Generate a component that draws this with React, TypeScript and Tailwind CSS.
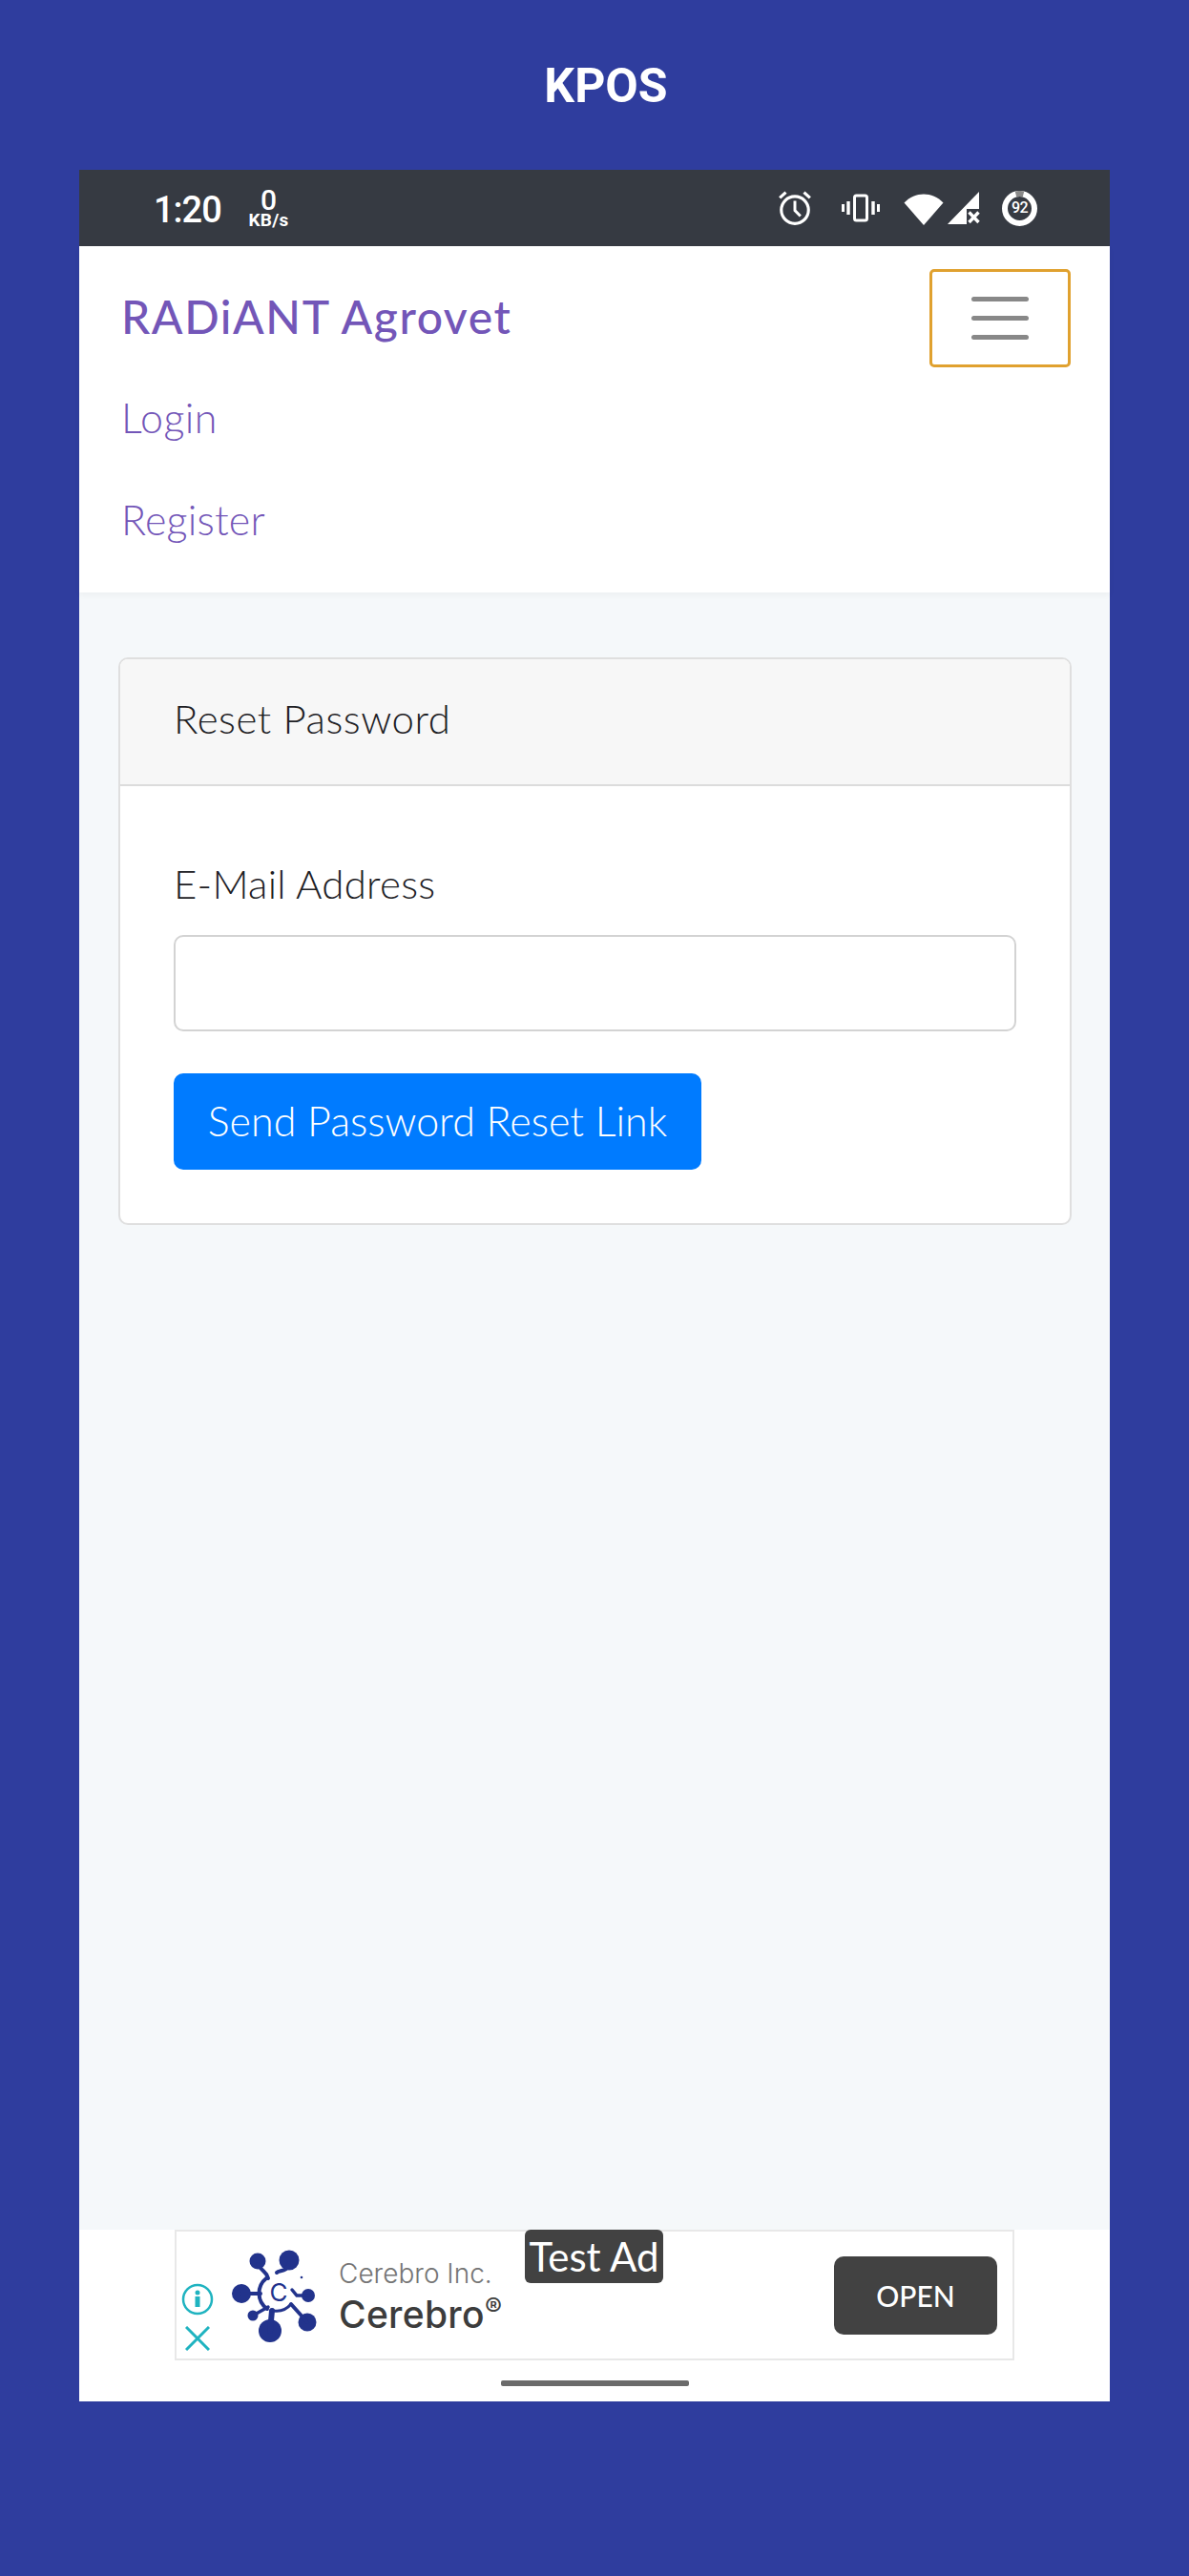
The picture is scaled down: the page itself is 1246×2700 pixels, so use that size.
import React from "react";

function Alarm() {
  return (
    <svg width="38" height="38" viewBox="0 0 36 36" fill="none" stroke="#fff" strokeWidth="3">
      <circle cx="18" cy="20" r="13.5" />
      <path d="M18 11v9.5l5.5 5.5" strokeWidth="2.8" />
      <path d="M3 8l6-5.5M33 8l-6-5.5" strokeWidth="3" />
    </svg>
  );
}
function Vibrate() {
  return (
    <svg width="40" height="30" viewBox="0 0 40 30" fill="none" stroke="#fff">
      <rect x="13.5" y="2" width="13" height="26" rx="2" strokeWidth="3" />
      <path d="M7 8v14M33 8v14" strokeWidth="3.4" />
      <path d="M1.5 11v8M38.5 11v8" strokeWidth="3" />
    </svg>
  );
}
function Wifi() {
  return (
    <svg width="42" height="36" viewBox="0 0 42 36" fill="#fff">
      <path d="M0.5 12.5C12 0.5 30 0.5 41.5 12.5L21 36Z" />
    </svg>
  );
}
function Signal() {
  return (
    <svg width="36" height="36" viewBox="0 0 36 36" fill="#fff">
      <path d="M34 1V19H21V35H1Z" />
      <path d="M23.5 22.5L33.5 33M33.5 22.5L23.5 33" stroke="#fff" strokeWidth="3.4" fill="none" />
    </svg>
  );
}
function Battery() {
  return (
    <div className="relative w-[37px] h-[37px]">
      <svg width="37" height="37" viewBox="0 0 37 37" fill="none">
        <circle cx="18.5" cy="18.5" r="15.5" stroke="#fff" strokeWidth="6" />
        <path d="M14.5 3.5A15.5 15.5 0 0 1 22.5 3.5" stroke="#8a8a8a" strokeWidth="6" />
      </svg>
      <span className="absolute inset-0 flex items-center justify-center text-[16px] font-medium text-white font-['Roboto',sans-serif] tracking-[-0.5px]">92</span>
    </div>
  );
}
function Logo() {
  const c = "#22338c";
  return (
    <svg width="90" height="98" viewBox="0 0 90 98" fill="none" stroke={c} strokeWidth="4" strokeLinecap="round">
      <circle cx="27" cy="12" r="8.5" fill={c} stroke="none" />
      <circle cx="60" cy="11" r="10.5" fill={c} stroke="none" />
      <circle cx="10" cy="46" r="10" fill={c} stroke="none" />
      <circle cx="80" cy="48" r="7" fill={c} stroke="none" />
      <circle cx="22" cy="69" r="5.5" fill={c} stroke="none" />
      <circle cx="40" cy="85" r="12" fill={c} stroke="none" />
      <circle cx="79" cy="76" r="9.5" fill={c} stroke="none" />
      <path d="M27 15C32 24 36 22 38 30" />
      <path d="M60 14C58 24 50 21 47 24" strokeWidth="4" />
      <path d="M10 46H30" />
      <path d="M22 69L38 60" strokeWidth="3.5" />
      <path d="M40 85L42 64" strokeWidth="6" />
      <path d="M79 76L62 57" strokeWidth="4" />
      <path d="M80 48H68L63 42" strokeWidth="3.5" />
      <path d="M36 30A20 20 0 0 0 37 62" strokeWidth="4" />
      <path d="M62 57A20 20 0 0 1 44 64" strokeWidth="3" />
      <circle cx="73" cy="29" r="1.3" fill={c} stroke="none" />
      <text x="49" y="54" textAnchor="middle" fontSize="26" fontFamily="Inter, sans-serif" fill={c} stroke="none">C</text>
    </svg>
  );
}

export default function App() {
  return (
    <div className="w-[1246px] h-[2700px] bg-[#2f3d9e] font-['Lato',sans-serif] flex flex-col items-center">
      <div className="h-[178px] w-full flex items-start justify-center pt-[65px] pl-[24px]">
        <h1 className="text-[50px] leading-[50px] font-bold text-white font-['Roboto',sans-serif]">KPOS</h1>
      </div>

      <div className="w-[1080px] h-[2339px] flex flex-col bg-white">
        <div className="h-[80px] bg-[#363a42] flex items-center text-white relative shrink-0">
          <span className="ml-[78px] w-[70px] text-[38px] leading-[38px] font-medium font-['Roboto',sans-serif] tracking-[-1px] pt-[3px]">1:20</span>
          <div className="ml-[30px] w-[41px] flex flex-col items-center font-['Roboto',sans-serif] pb-[1px]">
            <span className="text-[30px] leading-[26px] font-medium">0</span>
            <span className="text-[19px] leading-[15px] font-bold whitespace-nowrap tracking-[0.2px]">KB/s</span>
          </div>
          <div className="ml-auto mr-[76px] flex items-center">
            <Alarm />
            <div className="ml-[30px]"><Vibrate /></div>
            <div className="ml-[25px]"><Wifi /></div>
            <div className="ml-[3px]"><Signal /></div>
            <div className="ml-[22px]"><Battery /></div>
          </div>
        </div>

        <div className="h-[363px] shrink-0 bg-white pl-[44px] pr-[47px] shadow-[0_3px_6px_rgba(0,0,0,0.04)] relative text-[#7356b8]">
          <div className="flex items-start justify-between">
            <a className="mt-[44px] text-[48px] leading-[60px] font-medium tracking-[1.6px]">RADiANT Agrovet</a>
            <button className="mt-[24px] -mr-[6px] w-[148px] h-[103px] border-[3px] border-[#e0a12f] rounded-[5px] flex flex-col items-center justify-center gap-[15px]">
              <span className="w-[60px] h-[5px] rounded-full bg-[#888888]"></span>
              <span className="w-[60px] h-[5px] rounded-full bg-[#888888]"></span>
              <span className="w-[60px] h-[5px] rounded-full bg-[#888888]"></span>
            </button>
          </div>
          <a className="block text-[43px] leading-[106px] font-light tracking-[0.4px]">Login</a>
          <a className="block mt-[1px] text-[43px] leading-[106px] font-light tracking-[0.2px]">Register</a>
        </div>

        <div className="flex-1 bg-[#f5f8fa] pt-[68px] px-[41px]">
          <div className="h-[595px] w-[999px] bg-white border-2 border-[#dfdfdf] rounded-[10px] overflow-hidden">
            <div className="h-[133px] bg-[#f7f7f7] border-b-2 border-[#dcdcdc] pl-[56px] pt-[37px] text-[42px] leading-[50px] font-light tracking-[0.5px] text-[#1d2024]">Reset Password</div>
            <div className="px-[56px] pt-[77px]">
              <label className="block text-[42px] leading-[50px] font-light tracking-[0.25px] text-[#1d2024]">E-Mail Address</label>
              <input className="block mt-[29px] w-full h-[101px] bg-white border-2 border-[#d3d3d3] rounded-[10px]" />
              <button className="mt-[44px] w-[553px] h-[101px] bg-[#007bff] rounded-[10px] text-white text-[43px] font-light flex items-center justify-center">Send Password Reset Link</button>
            </div>
          </div>
        </div>

        <div className="h-[180px] shrink-0 bg-white relative">
          <div className="ml-[100px] w-[880px] h-[137px] border-2 border-[#e8e8e8] flex items-start relative">
            <div className="absolute left-[5px] top-[54px] w-[34px] flex flex-col items-center gap-[11px]">
              <svg width="34" height="34" viewBox="0 0 34 34" fill="none" stroke="#1fb3c0">
                <circle cx="17" cy="17" r="15" strokeWidth="2.5" />
                <circle cx="17" cy="10" r="2.5" fill="#1fb3c0" stroke="none" />
                <rect x="14.5" y="14" width="5" height="11" fill="#1fb3c0" stroke="none" />
              </svg>
              <svg width="26" height="26" viewBox="0 0 26 26" fill="none" stroke="#1fb3c0" strokeWidth="3">
                <path d="M1 1L25 25M25 1L1 25" />
              </svg>
            </div>
            <div className="ml-[58px] mt-[19px]"><Logo /></div>
            <div className="ml-[22px] mt-[28px] flex flex-col">
              <span className="text-[28px] leading-[32px] text-[#757575] font-['Inter',sans-serif] font-light">Cerebro Inc.</span>
              <span className="mt-[-2px] text-[39px] leading-[44px] tracking-[0.3px] text-[#3c3c3c] font-['Inter',sans-serif] font-medium">Cerebro<span className="text-[27px] align-[12px] font-normal">®</span></span>
            </div>
            <button className="absolute left-[689px] top-[26px] w-[171px] h-[82px] bg-[#424242] rounded-[10px] text-white text-[30px] font-medium">OPEN</button>
          </div>
          <div className="absolute left-[467px] top-0 w-[145px] h-[56px] bg-[#424242] rounded-[6px] text-white text-[42px] leading-[56px] text-center">Test Ad</div>
          <div className="absolute left-[442px] top-[158px] w-[197px] h-[6px] rounded-[2px] bg-[#6b6b6b]"></div>
        </div>
      </div>
    </div>
  );
}
